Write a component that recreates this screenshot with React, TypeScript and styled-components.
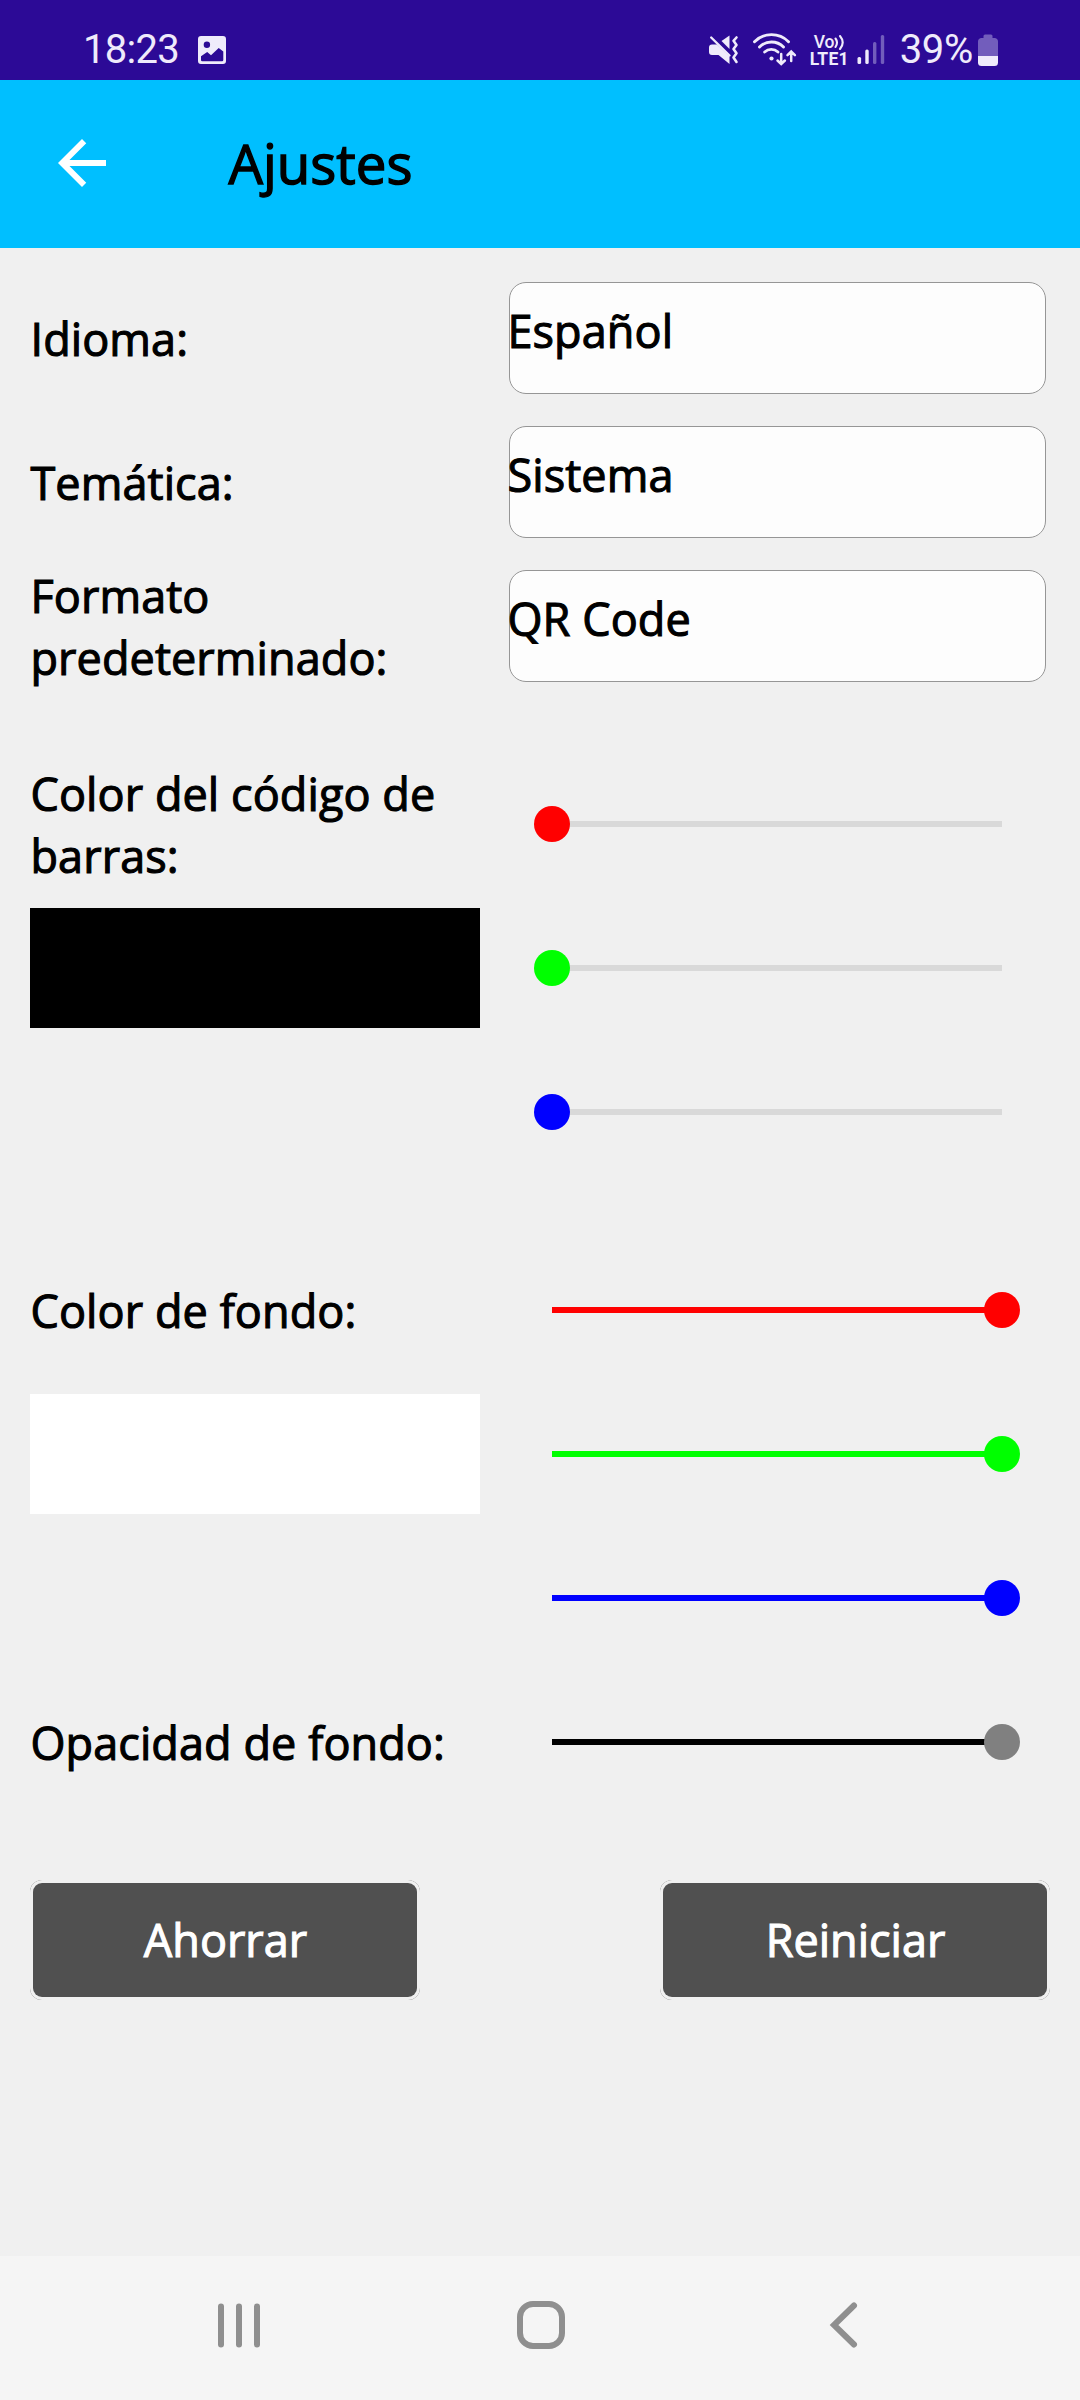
import React from "react";
import styled, { createGlobalStyle } from "styled-components";

const GlobalStyle = createGlobalStyle`
  *, *::before, *::after { box-sizing: border-box; }
  html, body { margin: 0; padding: 0; background: #f0f0f0; }
  svg { display: block; flex: none; }
`;

const Screen = styled.div`
  width: 1080px;
  height: 2400px;
  display: flex;
  flex-direction: column;
  overflow: hidden;
  background: #f0f0f0;
  color: #000;
  font: 400 45px/61.3px "Open Sans", sans-serif;
  letter-spacing: 0.08px;
  -webkit-text-stroke: 1.1px currentColor;
`;

const StatusBar = styled.header`
  flex: none;
  height: 80px;
  padding: 10px 82px 0 83px;
  display: flex;
  justify-content: space-between;
  background: #2c0a96;
  color: #efebfb;
  font-family: Roboto, sans-serif;
  letter-spacing: 0;
  -webkit-text-stroke: 0;
`;

const StatusGroup = styled.div`
  display: flex;
  align-items: flex-start;
  height: 70px;
`;

const StatusText = styled.span<{ $tight?: boolean }>`
  font-size: 40px;
  line-height: 79px;
  height: 70px;
  letter-spacing: ${(p) => (p.$tight ? -0.7 : -0.3)}px;
  white-space: nowrap;
`;

const StatusIcon = styled.span<{ $left?: number; $top?: number }>`
  display: block;
  margin-left: ${(p) => p.$left ?? 0}px;
  padding-top: ${(p) => p.$top ?? 20}px;
`;

const Network = styled.div`
  width: 40px;
  margin-left: 12px;
  padding-top: 24px;
  display: flex;
  flex-direction: column;
  font-weight: 700;
  font-size: 17.5px;
  line-height: 17px;
`;

const NetworkLine = styled.div`
  display: flex;
  height: 17px;
  white-space: nowrap;
  letter-spacing: 0.2px;

  &:first-child {
    padding-left: 4px;
    font-weight: 500;
    letter-spacing: 0;
  }
`;

const AppBar = styled.div`
  flex: none;
  height: 168px;
  padding-left: 58px;
  display: flex;
  align-items: center;
  background: #00bfff;
`;

const BackButton = styled.button`
  width: 48px;
  height: 48px;
  margin-top: -2px;
  padding: 0;
  border: 0;
  background: none;
  color: #fff;
`;

const Title = styled.h1`
  margin: 0 0 1px 122.5px;
  font-size: 54.6px;
  line-height: 77px;
  font-weight: 400;
  letter-spacing: 0;
  -webkit-text-stroke-width: 1.4px;
`;

const Content = styled.main`
  flex: 1;
  padding: 18px 30px 0;
`;

const Section = styled.section`
  display: grid;
  grid-template-columns: 450px 1fr;
  grid-auto-rows: 144px;
  align-items: center;
  margin-bottom: 54px;
`;

const Label = styled.label`
  display: block;
  padding: 1px 0 0 0.5px;
`;

const SelectBox = styled.div`
  width: 537px;
  height: 112px;
  margin-left: 28.5px;
  padding-top: 17px;
  border: 1.5px solid #969696;
  border-radius: 17px;
  background: #fdfdfd;
  text-indent: -2px;
  white-space: nowrap;
`;

const Swatch = styled.div<{ $color: string }>`
  width: 450px;
  height: 120px;
  background: ${(p) => p.$color};
`;

const Track = styled.div<{ $color: string; $full: boolean }>`
  grid-column: 2;
  margin-left: 72px;
  width: 450px;
  height: 6px;
  display: flex;
  align-items: center;
  justify-content: ${(p) => (p.$full ? "flex-end" : "flex-start")};
  background: ${(p) => (p.$full ? p.$color : "#d9d9d9")};
`;

const Thumb = styled.div<{ $color: string }>`
  flex: none;
  width: 36px;
  height: 36px;
  margin: 0 -18px;
  border-radius: 50%;
  background: ${(p) => p.$color};
`;

const Actions = styled.div`
  display: flex;
  justify-content: space-between;
  padding-top: 12px;
`;

const ActionFrame = styled.div`
  width: 390px;
  height: 120px;
  border-radius: 12px;
  background: #505050;
`;

const ActionInset = styled.div`
  height: 100%;
  padding: 3px;
  border-radius: 12px;
  background: #f0f0f0;
`;

const ActionButton = styled.button`
  display: block;
  width: 100%;
  height: 100%;
  padding: 0 0 0 1px;
  border: 0;
  border-radius: 9px;
  background: #505050;
  color: #fff;
  font: inherit;
  -webkit-text-stroke: inherit;
`;

const NavBar = styled.nav`
  flex: none;
  height: 144px;
  padding: 0 215px 6px 216px;
  display: flex;
  align-items: center;
  justify-content: space-between;
  background: #f5f5f5;
`;

function PictureIcon() {
  return (
    <svg width="28" height="28" viewBox="0 0 28 28">
      <path
        fill="#efebfb"
        fillRule="evenodd"
        d="M3 0H25a3 3 0 0 1 3 3V25a3 3 0 0 1-3 3H3a3 3 0 0 1-3-3V3a3 3 0 0 1 3-3ZM8.900 5.500a3.200 3.200 0 1 0 0 6.400 3.200 3.200 0 0 0 0-6.400ZM3 20.200V24q0 1.300 1.300 1.300H24q1.300 0 1.300-1.300V15.500L20.700 12 13 19.200 9.200 16Z"
      />
    </svg>
  );
}

function MuteVibrateIcon() {
  return (
    <svg width="30" height="34" viewBox="0 0 30 34" fill="#efebfb">
      <path d="M12.500 11 20.500 5.500V19Z" />
      <path d="M3 14.500H8L20.500 26.500V34L9.500 25H3Q0 25 0 22V17.500Q0 14.500 3 14.500Z" />
      <path d="M2.200 7.500 20.500 25.500" fill="none" stroke="#efebfb" strokeWidth="2.400" strokeLinecap="round" />
      <path
        d="M27.500 7.500 24.500 10.800 27.500 15 24.500 19 27.500 23.300 24.500 27.500 27.500 32"
        fill="none"
        stroke="#efebfb"
        strokeWidth="2.600"
        strokeLinecap="round"
        strokeLinejoin="round"
      />
    </svg>
  );
}

function WifiIcon() {
  return (
    <svg width="46" height="36" viewBox="0 0 46 36" fill="none" stroke="#efebfb" strokeWidth="2.900" strokeLinecap="round">
      <path d="M2.500 11.700a24 24 0 0 1 34 0" />
      <path d="M7.500 17a17 17 0 0 1 24 0" />
      <path d="M12.600 22a10 10 0 0 1 13.400 0" />
      <circle cx="19.500" cy="28.500" r="2.100" fill="#efebfb" stroke="none" />
      <path d="M29.200 24V33.500M25.500 30.500 29.200 34 32.900 30.500M39.200 31V22M35.500 25.200 39.200 21.500 42.900 25.200" strokeWidth="2.500" />
    </svg>
  );
}

function CallWaves() {
  return (
    <svg width="12" height="17" viewBox="0 0 12 17" fill="none" stroke="#efebfb" strokeWidth="2.100" strokeLinecap="round">
      <path d="M1.500 4.500q3 4 0 8.500M6 2q5.400 6.500 0 13" />
    </svg>
  );
}

function SignalIcon() {
  return (
    <svg width="28" height="34" viewBox="0 0 28 34">
      <rect x="0.500" y="27" width="3.600" height="7" rx="1.500" fill="#efebfb" />
      <rect x="8.300" y="19.500" width="3.400" height="14.500" rx="1.500" fill="#efebfb" />
      <rect x="16" y="12" width="3.400" height="22" rx="1.500" fill="#725dbc" />
      <rect x="23.800" y="5" width="3.400" height="29" rx="1.500" fill="#725dbc" />
    </svg>
  );
}

function BatteryIcon() {
  return (
    <svg width="20" height="36" viewBox="0 0 20 36">
      <path d="M7 4.500H13Q14.500 4.500 14.500 6V8H17Q20 8.500 20 11.500V26H0V11.500Q0 8.500 3 8H5.500V6Q5.500 4.500 7 4.500Z" fill="#725dbc" />
      <path d="M0 26H20V32.500Q20 36 16.500 36H3.500Q0 36 0 32.500Z" fill="#efebfb" />
    </svg>
  );
}

function BackArrow() {
  return (
    <svg width="48" height="48" viewBox="4 4 16 16" fill="currentColor">
      <path d="M20 11H7.830l5.590-5.590L12 4l-8 8 8 8 1.410-1.410L7.830 13H20v-2z" />
    </svg>
  );
}

type SliderProps = { color: string; full?: boolean; track?: string };

function Slider({ color, full = false, track }: SliderProps) {
  return (
    <Track $color={track ?? color} $full={full}>
      <Thumb $color={color} />
    </Track>
  );
}

function Action({ text }: { text: string }) {
  return (
    <ActionFrame>
      <ActionInset>
        <ActionButton>{text}</ActionButton>
      </ActionInset>
    </ActionFrame>
  );
}

const selects = [
  ["Idioma:", "Español"],
  ["Temática:", "Sistema"],
  ["Formato predeterminado:", "QR Code"],
];

export default function App() {
  return (
    <Screen>
      <GlobalStyle />
      <StatusBar>
        <StatusGroup>
          <StatusText $tight>18:23</StatusText>
          <StatusIcon $left={19} $top={26}>
            <PictureIcon />
          </StatusIcon>
        </StatusGroup>
        <StatusGroup>
          <StatusIcon>
            <MuteVibrateIcon />
          </StatusIcon>
          <StatusIcon $left={13}>
            <WifiIcon />
          </StatusIcon>
          <Network>
            <NetworkLine>
              Vo
              <CallWaves />
            </NetworkLine>
            <NetworkLine>LTE1</NetworkLine>
          </Network>
          <StatusIcon $left={7}>
            <SignalIcon />
          </StatusIcon>
          <StatusIcon $left={15} />
          <StatusText>39%</StatusText>
          <StatusIcon $left={5}>
            <BatteryIcon />
          </StatusIcon>
        </StatusGroup>
      </StatusBar>

      <AppBar>
        <BackButton aria-label="Atrás">
          <BackArrow />
        </BackButton>
        <Title>Ajustes</Title>
      </AppBar>

      <Content>
        <Section>
          {selects.map(([label, value]) => (
            <React.Fragment key={label}>
              <Label>{label}</Label>
              <SelectBox>{value}</SelectBox>
            </React.Fragment>
          ))}
        </Section>

        <Section>
          <Label>Color del código de barras:</Label>
          <Slider color="#ff0000" />
          <Swatch $color="#000000" />
          <Slider color="#00ff00" />
          <Slider color="#0000ff" />
        </Section>

        <Section>
          <Label>Color de fondo:</Label>
          <Slider color="#ff0000" full />
          <Swatch $color="#ffffff" />
          <Slider color="#00ff00" full />
          <Slider color="#0000ff" full />
          <Label>Opacidad de fondo:</Label>
          <Slider color="#808080" track="#000000" full />
        </Section>

        <Actions>
          <Action text="Ahorrar" />
          <Action text="Reiniciar" />
        </Actions>
      </Content>

      <NavBar>
        <svg width="46" height="48" viewBox="0 0 46 48" stroke="#8f8f8f" strokeWidth="6" strokeLinecap="round">
          <path d="M5 5.500V43.500M23 5.500V43.500M41 5.500V43.500" />
        </svg>
        <svg width="48" height="48" viewBox="0 0 48 48" fill="none" stroke="#8f8f8f" strokeWidth="6">
          <rect x="3" y="3" width="42" height="42" rx="13" />
        </svg>
        <svg width="46" height="48" viewBox="0 0 46 48" fill="none" stroke="#8f8f8f" strokeWidth="6" strokeLinecap="round">
          <path d="M35 4.500 15 24 35 43.500" />
        </svg>
      </NavBar>
    </Screen>
  );
}
